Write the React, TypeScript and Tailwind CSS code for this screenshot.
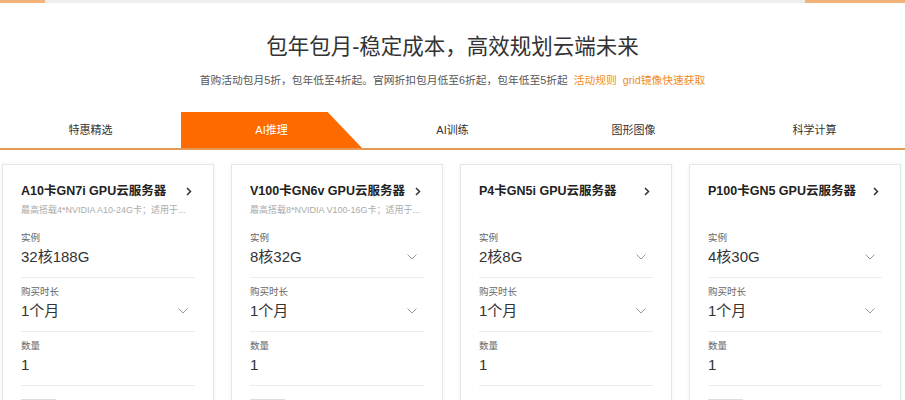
import React from 'react';

interface Product {
    name: string;
    desc?: string;
    spec: string;
    specSelect: boolean;
    limit: boolean;
}

const TABS = ['特惠精选', 'AI推理', 'AI训练', '图形图像', '科学计算'];

const PRODUCTS: Product[] = [
    { name: 'A10卡GN7i GPU云服务器', desc: '最高搭载4*NVIDIA A10-24G卡；适用于...', spec: '32核188G', specSelect: false, limit: true },
    { name: 'V100卡GN6v GPU云服务器', desc: '最高搭载8*NVIDIA V100-16G卡；适用于...', spec: '8核32G', specSelect: true, limit: true },
    { name: 'P4卡GN5i GPU云服务器', spec: '2核8G', specSelect: true, limit: false },
    { name: 'P100卡GN5 GPU云服务器', spec: '4核30G', specSelect: true, limit: true },
];

function ChevronDown() {
    return (
        <svg width="10" height="6" viewBox="0 0 10 6" fill="none" stroke="#999" strokeWidth="1">
            <polyline points="0.5,0.5 5,5 9.5,0.5" />
        </svg>
    );
}

function ChevronRight() {
    return (
        <svg width="6" height="9" viewBox="0 0 6 9" fill="none" stroke="#333" strokeWidth="1.5">
            <polyline points="1,1 4.5,4.5 1,8" />
        </svg>
    );
}

function Field({ label, value, select }: { label: string; value: string; select: boolean }) {
    return (
        <div className="pt-[7px] pb-[9px] border-b border-[#ececec]">
            <div className="text-[9.5px] leading-[14px] text-[#666]">{label}</div>
            <div className="mt-[1px] flex items-center justify-between pr-[7px]">
                <span className="text-[15px] leading-[22px] text-[#333]">{value}</span>
                {select && <ChevronDown />}
            </div>
        </div>
    );
}

function ProductCard({ product }: { product: Product }) {
    return (
        <div className="w-[212px] shrink-0 bg-white border border-[#e6e6e6] shadow-[0_0_4px_rgba(0,0,0,0.05)] px-[18px] pt-[16px]">
            <div className="flex items-center justify-between pr-[3px]">
                <span className="text-[12.5px] leading-[20px] font-bold text-[#222] whitespace-nowrap">{product.name}</span>
                <ChevronRight />
            </div>
            <div className="mt-[2px] mb-[7px] h-[14px] text-[9px] leading-[14px] text-[#aaa] whitespace-nowrap overflow-hidden">
                {product.desc}
            </div>
            <Field label="实例" value={product.spec} select={product.specSelect} />
            <Field label="购买时长" value="1个月" select={true} />
            <Field label="数量" value="1" select={false} />
            <div className="pt-[7px] pb-[10px] h-[32px]">
                {product.limit && (
                    <span className="inline-block border border-[#ddd] bg-[#f7f7f7] px-[5px] text-[9px] leading-[14px] text-[#555]">限1件</span>
                )}
            </div>
        </div>
    );
}

export default function App() {
    return (
        <div className="w-[905px] h-[400px] overflow-hidden bg-white font-['Liberation_Sans','Noto_Sans_CJK_SC',sans-serif]">
            {/* strip left over from the section above */}
            <div className="flex h-[3px] bg-[#eeeeee]">
                <div className="w-[45px] bg-[#f2b27a]" />
                <div className="flex-1" />
                <div className="w-[100px] bg-[#f2b27a]" />
            </div>

            <h1 className="mt-[30px] text-center text-[21.5px] leading-[28px] font-normal text-[#333]">
                包年包月-稳定成本，高效规划云端未来
            </h1>
            <p className="mt-[11px] text-center text-[10.75px] leading-[16px] text-[#555]">
                首购活动包月5折，包年低至4折起。官网折扣包月低至6折起，包年低至5折起
                <span className="ml-[6px] text-[#f08a24]">活动规则</span>
                <span className="ml-[6px] text-[#f08a24]">grid镜像快速获取</span>
            </p>

            <div className="mt-[24px] flex border-b-2 border-[#e29a55]">
                {TABS.map((tab, i) => (
                    <div key={tab} className="relative flex-1 h-[36px] flex items-center justify-center">
                        {i === 1 && (
                            <div className="absolute inset-0 bg-[#ff6a00] [clip-path:polygon(0_0,81%_0,100%_100%,0_100%)]" />
                        )}
                        <span className={`relative text-[11px] ${i === 1 ? 'text-white' : 'text-[#333]'}`}>{tab}</span>
                    </div>
                ))}
            </div>

            <div className="mt-[14px] flex gap-[17px] px-[2px]">
                {PRODUCTS.map((p) => (
                    <ProductCard key={p.name} product={p} />
                ))}
            </div>
        </div>
    );
}
